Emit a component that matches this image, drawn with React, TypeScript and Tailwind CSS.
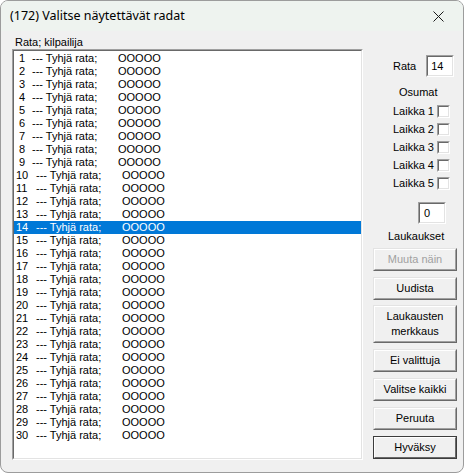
import React from 'react'

const ui = { fontFamily: '"Liberation Sans", Arial, sans-serif' }

const rows = Array.from({ length: 30 }, (_, i) => i + 1)

function Sunken({ className = '', children }: { className?: string; children?: React.ReactNode }) {
  return (
    <div className={`border border-t-[#a0a0a0] border-l-[#a0a0a0] border-r-white border-b-white ${className}`}>
      <div className="w-full h-full border border-t-[#696969] border-l-[#696969] border-r-[#e3e3e3] border-b-[#e3e3e3] bg-white">
        {children}
      </div>
    </div>
  )
}

function Button({ label, disabled, isDefault, className = '' }: { label: React.ReactNode; disabled?: boolean; isDefault?: boolean; className?: string }) {
  return (
    <div className={`w-[84px] border ${isDefault ? 'border-[#3c3c3c]' : 'border-t-[#e3e3e3] border-l-[#e3e3e3] border-r-[#696969] border-b-[#696969]'} ${className}`}>
      <div className={`w-full h-full flex items-center justify-center text-center leading-[15px] bg-[#f0f0f0] border ${isDefault ? 'border-t-white border-l-white border-r-[#696969] border-b-[#696969]' : 'border-t-white border-l-white border-r-[#a0a0a0] border-b-[#a0a0a0]'} ${disabled ? 'text-[#a0a0a0]' : 'text-black'}`}>
        {label}
      </div>
    </div>
  )
}

export default function App() {
  return (
    <div className="w-[466px] h-[474px] bg-white text-[11px] text-black" style={ui}>
      <div className="w-[464px] h-[473px] rounded-[8px] border border-[#9c9c9c] bg-[#f0f0f0] overflow-hidden flex flex-col">
        {/* title bar */}
        <div className="h-[30px] shrink-0 bg-[#eef3ef] flex items-center justify-between pl-[9px] pr-[19px]">
          <span className="text-[12.5px] text-black" style={{ fontFamily: '"Segoe UI", "Noto Sans", sans-serif' }}>
            (172) Valitse näytettävät radat
          </span>
          <svg width="11" height="11" viewBox="0 0 11 11" className="mt-[1px]">
            <path d="M0.5 0.5 L10.5 10.5 M10.5 0.5 L0.5 10.5" stroke="#1a1a1a" strokeWidth="1" fill="none" />
          </svg>
        </div>

        <div className="flex flex-1">
          {/* left: list */}
          <div className="pl-[11px] flex flex-col">
            <div className="h-[18px] flex items-end">
              <span className="ml-[3px] leading-[13px]">Rata; kilpailija</span>
            </div>
            <Sunken className="w-[351px] h-[411px]">
              <div className="pt-[1px]">
                {rows.map(n => {
                  const sel = n === 14
                  return (
                    <div key={n} className={`h-[13px] leading-[13px] flex whitespace-pre ${sel ? 'bg-[#0078d7] text-white' : ''}`}>
                      <span className={n < 10 ? 'pl-[5px] w-[18px]' : 'pl-[2px] w-[22px]'}>{n}</span>
                      <span className="w-[86px]">--- Tyhjä rata;</span>
                      <span>OOOOO</span>
                    </div>
                  )
                })}
              </div>
            </Sunken>
          </div>

          {/* right: controls */}
          <div className="ml-[10px] w-[84px] flex flex-col">
            <div className="mt-[24px] flex items-center h-[22px]">
              <span className="ml-[20px]">Rata</span>
              <Sunken className="ml-[10px] w-[28px] h-[22px]">
                <div className="pl-[3px] leading-[18px]">14</div>
              </Sunken>
            </div>
            <div className="mt-[9px] h-[13px] leading-[13px] pl-[26px]">Osumat</div>
            <div className="mt-[3px] flex flex-col">
              {[1, 2, 3, 4, 5].map(k => (
                <div key={k} className="h-[18px] flex items-center pl-[20px]">
                  <span className="w-[44px]">Laikka {k}</span>
                  <Sunken className="w-[13px] h-[13px]" />
                </div>
              ))}
            </div>
            <Sunken className="mt-[10px] ml-[45px] w-[28px] h-[22px]">
              <div className="pl-[4px] leading-[18px]">0</div>
            </Sunken>
            <div className="mt-[6px] h-[13px] leading-[13px] pl-[15px]">Laukaukset</div>
            <Button className="mt-[5px] h-[23px]" label="Muuta näin" disabled />
            <Button className="mt-[6px] h-[23px]" label="Uudista" />
            <Button className="mt-[5px] h-[38px]" label={<>Laukausten<br />merkkaus</>} />
            <Button className="mt-[6px] h-[23px]" label="Ei valittuja" />
            <Button className="mt-[6px] h-[23px]" label="Valitse kaikki" />
            <Button className="mt-[6px] h-[23px]" label="Peruuta" />
            <Button className="mt-[6px] h-[23px]" label="Hyväksy" isDefault />
          </div>
        </div>
      </div>
    </div>
  )
}
